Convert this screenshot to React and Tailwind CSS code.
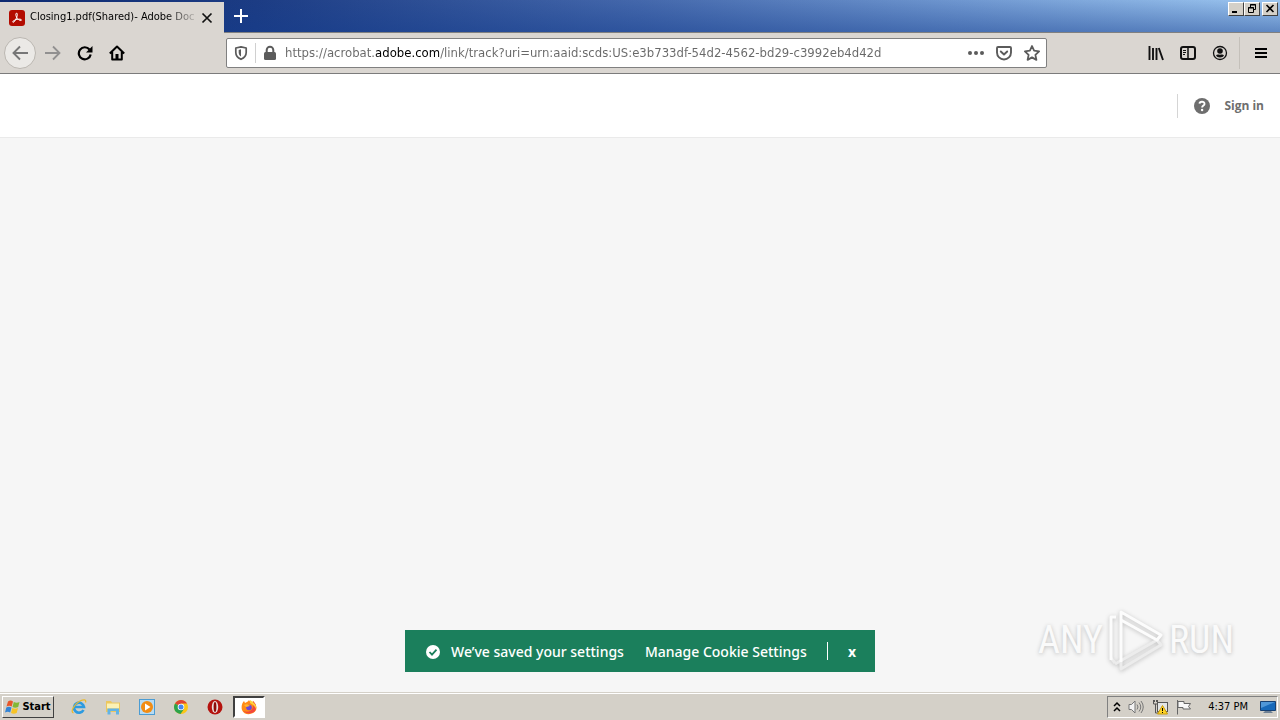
import { useState } from 'react';

const URL_TEXT =
  'https://acrobat.adobe.com/link/track?uri=urn:aaid:scds:US:e3b733df-54d2-4562-bd29-c3992eb4d42d';

function AcrobatIcon() {
  return (
    <svg className="size-4 shrink-0" viewBox="0 0 16 16" aria-hidden="true">
      <rect width="16" height="16" rx="3" fill="#b30b00" />
      <path
        d="M7.3 3.2c1.5-.5 1.1 2.4.4 4.2-.8 2-2.3 4.9-3.6 5-1.5-.5 1-2.4 3.8-3 2.300-.5 4.700-.3 4.600.7-.3 1.200-3-.1-4.200-1.700C7 6.800 6.300 4 7.300 3.200z"
        fill="none"
        stroke="#fff"
        strokeWidth="1"
      />
    </svg>
  );
}

function ShieldIcon() {
  return (
    <svg className="size-4" viewBox="0 0 16 16" aria-hidden="true">
      <path
        d="M8 1.800 13.200 3v4.500c0 3.200-2.300 5.500-5.200 6.800-2.900-1.300-5.200-3.600-5.200-6.800V3z"
        fill="none"
        stroke="#5b5b5b"
        strokeWidth="1.700"
        strokeLinejoin="round"
      />
      <path d="M8 4.300v7.300C6.300 10.600 5.700 9 5.700 7.300V5z" fill="#5b5b5b" />
    </svg>
  );
}

function LockIcon() {
  return (
    <svg className="size-4" viewBox="0 0 16 16" aria-hidden="true">
      <rect x="2" y="7" width="12" height="8" rx="1.500" fill="#5b5b5b" />
      <path d="M4.700 8V5a3.300 3.300 0 0 1 6.600 0v3" fill="none" stroke="#5b5b5b" strokeWidth="2" />
    </svg>
  );
}

function NavButton({ label, children, className = '' }) {
  return (
    <button type="button" aria-label={label} className={`flex size-8 items-center justify-center ${className}`}>
      {children}
    </button>
  );
}

function WindowButton({ label, children }) {
  return (
    <button
      type="button"
      aria-label={label}
      className="flex h-3.5 w-4 items-center justify-center border border-t-white border-r-[#404040] border-b-[#404040] border-l-white bg-[#d4d0c8]"
    >
      <svg className="h-3 w-3.5" viewBox="0 0 14 12" fill="none" stroke="#000">
        {children}
      </svg>
    </button>
  );
}

function TitleBar() {
  return (
    <div className="flex h-[33px] shrink-0 border-b border-[#808080] bg-[linear-gradient(180deg,transparent,rgba(20,60,140,0.45)),linear-gradient(90deg,#0d2a70_0%,#1c3c84_20%,#4468ac_50%,#6f97d0_75%,#9cc6f0_100%)]">
      <div className="mt-0.5 -mb-px flex w-56 items-center bg-[#dad6d1] pl-[9px] text-black">
        <AcrobatIcon />
        <span className="ml-[5px] w-[170px] font-['DejaVu_Sans_Condensed','Noto_Sans',sans-serif] text-[11px] whitespace-nowrap [mask-image:linear-gradient(90deg,#000_80%,transparent)]">
          Closing1.pdf(Shared)- Adobe Doc
        </span>
        <button type="button" aria-label="Close tab" className="ml-px">
          <svg className="size-3" viewBox="0 0 12 12" stroke="#111" strokeWidth="1.700">
            <path d="M1.500 1.500l9 9M10.500 1.500l-9 9" />
          </svg>
        </button>
      </div>
      <NavButton label="New tab" className="ml-px">
        <svg className="size-3.5" viewBox="0 0 14 14" stroke="#fff" strokeWidth="2">
          <path d="M7 0v14M0 7h14" />
        </svg>
      </NavButton>
      <div className="mt-0.5 mr-0.5 ml-auto flex items-start">
        <WindowButton label="Minimize">
          <path d="M3 9h5" strokeWidth="2" />
        </WindowButton>
        <WindowButton label="Restore">
          <path d="M5.500 4V1.500h5v5H9M5 2h6M3.500 4.500h5v5h-5zM3 5h6" />
        </WindowButton>
        <div className="w-0.5" />
        <WindowButton label="Close">
          <path d="M3.500 2l7 7M10.500 2l-7 7" strokeWidth="1.600" />
        </WindowButton>
      </div>
    </div>
  );
}

function Toolbar() {
  return (
    <div className="flex h-[41px] shrink-0 items-center border-b border-[#7b7b7b] bg-[#dad6d1] pl-1">
      <NavButton label="Back" className="rounded-full border border-[#bbb7b1] bg-[#ebe9e6]">
        <svg className="size-4" viewBox="0 0 16 16" fill="none" stroke="#777" strokeWidth="1.900">
          <path d="M16 8H1.500M8 1.500L1.500 8 8 14.500" />
        </svg>
      </NavButton>
      <NavButton label="Forward" className="ml-px">
        <svg className="size-4" viewBox="0 0 16 16" fill="none" stroke="#919090" strokeWidth="1.800">
          <path d="M0 8h14.500M8 1.500L14.500 8 8 14.500" />
        </svg>
      </NavButton>
      <NavButton label="Reload">
        <svg className="size-4" viewBox="0 0 16 16" fill="none" stroke="#000" strokeWidth="2.200">
          <path d="M12.500 4.500A6 6 0 1 0 13.700 9.500" />
          <path d="M15.500 1v6.500H9z" fill="#000" stroke="none" />
        </svg>
      </NavButton>
      <NavButton label="Home">
        <svg className="size-4" viewBox="0 0 16 16" fill="none" stroke="#000" strokeWidth="2">
          <path d="M.8 8.500L8 1.500l7.200 7M3.200 7v7.500h9.600V7" strokeLinejoin="round" />
          <path d="M6.500 9h3v5.500h-3z" fill="#000" stroke="none" />
        </svg>
      </NavButton>

      <div className="ml-[93px] flex h-[30px] min-w-0 flex-1 items-center rounded-xs border border-[#808080] bg-white pl-1.5">
        <button type="button" aria-label="Tracking protection">
          <ShieldIcon />
        </button>
        <div className="mx-1.5 h-5 w-px bg-[#d0d0d0]" />
        <button type="button" aria-label="Site information">
          <LockIcon />
        </button>
        <input
          type="text"
          aria-label="Address"
          defaultValue={URL_TEXT}
          className="ml-[7px] min-w-0 flex-1 bg-[linear-gradient(90deg,#686868_90px,#000_90px,#000_154px,#686868_154px)] bg-clip-text font-['DejaVu_Sans_Condensed','Noto_Sans',sans-serif] text-[13px] text-transparent outline-none"
        />
        <div className="mr-1.5 flex items-center gap-3">
          <button type="button" aria-label="Page actions">
            <svg className="size-4" viewBox="0 0 16 16" fill="#5b5b5b">
              <circle cx="2" cy="8" r="2" />
              <circle cx="8" cy="8" r="2" />
              <circle cx="14" cy="8" r="2" />
            </svg>
          </button>
          <button type="button" aria-label="Save to Pocket">
            <svg className="size-4" viewBox="0 0 16 16" fill="none" stroke="#5b5b5b" strokeWidth="1.900" strokeLinecap="round" strokeLinejoin="round">
              <path d="M2 2h12a1 1 0 0 1 1 1v4.500a7 7 0 0 1-14 0V3a1 1 0 0 1 1-1z" />
              <path d="M4.800 6.500L8 9.500l3.200-3" />
            </svg>
          </button>
          <button type="button" aria-label="Bookmark this page">
            <svg className="size-4" viewBox="0 0 16 16" fill="none" stroke="#5b5b5b" strokeWidth="1.800" strokeLinejoin="round">
              <path d="M8 1l2.100 4.700 5 .6-3.700 3.500 1 5.100L8 12.400l-4.400 2.500 1-5.100L.9 6.300l5-.6z" />
            </svg>
          </button>
        </div>
      </div>

      <div className="ml-[93px] flex h-full items-center">
        <NavButton label="Library">
          <svg className="size-4" viewBox="0 0 16 16" stroke="#111" strokeWidth="1.900">
            <path d="M1.500 1v14M5 3v12M8.500 3v12M10.800 3l4.200 12" />
          </svg>
        </NavButton>
        <NavButton label="Sidebars">
          <svg className="size-4" viewBox="0 0 16 16" fill="none" stroke="#111">
            <rect x="1" y="2" width="14" height="12" rx="2" strokeWidth="2" />
            <path d="M8 2v12" strokeWidth="1.500" />
            <path d="M3 5.500h3M3 7.500h3M3 9.500h2" />
          </svg>
        </NavButton>
        <NavButton label="Account">
          <svg className="size-4" viewBox="0 0 16 16" fill="#111">
            <circle cx="8" cy="8" r="6.500" fill="none" stroke="#111" strokeWidth="1.300" />
            <circle cx="8" cy="6" r="2.800" />
            <path d="M4 10.300C5 9.300 6 9.700 8 9.700s3-.4 4 .6C11.300 11.800 10 12.500 8 12.500s-3.300-.7-4-2.200z" />
          </svg>
        </NavButton>
        <div className="ml-[3px] h-8 w-px bg-[#c4c0ba]" />
        <NavButton label="Menu" className="mr-[3px] ml-[5px]">
          <svg className="size-3.5" viewBox="0 0 14 14" stroke="#000" strokeWidth="2">
            <path d="M1 3h12M1 7h12M1 11h12" />
          </svg>
        </NavButton>
      </div>
    </div>
  );
}

function PageHeader() {
  return (
    <header className="flex h-16 shrink-0 items-center justify-end border-b border-[#eaeaea] bg-white pr-4 text-[#6e6e6e]">
      <div className="h-6 w-px bg-[#d5d5d5]" />
      <button type="button" aria-label="Help" className="ml-4">
        <svg className="size-4" viewBox="0 0 16 16">
          <circle cx="8" cy="8" r="8" fill="#6e6e6e" />
          <path d="M5.500 5.600C5.700 3.200 10.600 3.100 10.500 5.900c0 1.700-2.400 1.700-2.400 3.700" fill="none" stroke="#fff" strokeWidth="1.900" />
          <circle cx="8.100" cy="12" r="1.200" fill="#fff" />
        </svg>
      </button>
      <a href="#signin" className="ml-3.5 font-['Open_Sans',sans-serif] text-[12px] font-bold">
        Sign in
      </a>
    </header>
  );
}

function CookieToast({ onClose }) {
  return (
    <div
      role="status"
      className="absolute bottom-5 left-1/2 flex h-[42px] w-[470px] -translate-x-1/2 items-center bg-[#1b7f5c] pl-5 font-['Noto_Sans',sans-serif] text-[14px] font-medium whitespace-nowrap text-white"
    >
      <svg className="size-4 shrink-0" viewBox="0 0 16 16">
        <circle cx="8" cy="9" r="7" fill="#fff" />
        <path d="M4.500 9l2.500 2.700 4.500-5" fill="none" stroke="#1b7f5c" strokeWidth="1.800" />
      </svg>
      <span className="ml-2.5">We’ve saved your settings</span>
      <a href="#cookies" className="ml-[21px]">
        Manage Cookie Settings
      </a>
      <div className="ml-auto h-[18px] w-px bg-white" />
      <button type="button" aria-label="Close" onClick={onClose} className="mr-[19px] ml-5 font-bold">
        x
      </button>
    </div>
  );
}

function Watermark() {
  return (
    <div className="absolute right-[46px] bottom-5 flex h-16 items-center gap-1 font-['Liberation_Sans_Narrow','Roboto_Condensed','Liberation_Sans',sans-serif] text-[38px] text-[#fafafa] [text-shadow:0_1px_4px_#bdbdbd]">
      <span>ANY</span>
      <svg
        className="h-16 w-[58px] [filter:drop-shadow(0_1px_2px_#bdbdbd)]"
        viewBox="0 0 58 64"
        fill="none"
        strokeWidth="3"
        strokeLinejoin="round"
      >
        <path d="M14 54V61l40-24-4-5L8 56M4 50l4 5" stroke="#ececec" />
        <path d="M9 9H4v43M14 54V4l40 23-4 5L14 12" stroke="#fcfcfc" />
      </svg>
      <span>RUN</span>
    </div>
  );
}

function TaskIcon({ label, children, active }) {
  return (
    <button
      type="button"
      aria-label={label}
      className={
        active
          ? 'flex h-[22px] w-8 items-center justify-center border-2 border-t-[#404040] border-r-white border-b-white border-l-[#404040] bg-white'
          : 'flex h-[22px] w-8 items-center justify-center'
      }
    >
      <svg className="size-4" viewBox="0 0 16 16">
        {children}
      </svg>
    </button>
  );
}

function Taskbar() {
  return (
    <footer className="flex h-7 shrink-0 items-center border-t border-[#d4d0c8] bg-[#d4d0c8] px-0.5 font-['DejaVu_Sans_Condensed','Noto_Sans',sans-serif] text-[11px] text-black shadow-[inset_0_1px_0_#fff]">
      <button
        type="button"
        className="flex h-[22px] w-[52px] items-center justify-center gap-px border border-t-white border-r-[#404040] border-b-[#404040] border-l-white pt-px font-bold"
      >
        <svg className="size-4 shrink-0" viewBox="0 0 16 16">
          <path d="M3 2.500C5 1 6.500 1.500 8 2.500L6.700 7.500C5 6.500 3.500 6.500 1.500 7.500z" fill="#e8562a" />
          <path d="M8.800 3c2 1 3.700 1 5.700 0l-1.300 5c-2 1-4 1-5.700 0z" fill="#83b735" />
          <path d="M1.300 8.500c2-1.200 3.500-1 5.200 0l-1.300 5C3.500 12.500 2 12.500 0 13.500z" fill="#3384d6" />
          <path d="M7.300 9c2 1 3.700 1 5.700 0l-1.300 5c-2 1-4 1-5.700 0z" fill="#f7c325" />
        </svg>
        <span>Start</span>
      </button>
      <div className="ml-[9px] flex items-center gap-0.5">
        <TaskIcon label="Internet Explorer">
          <path d="M12.500 11A5 5 0 1 1 13 8H4" fill="none" stroke="#2d9be0" strokeWidth="2.600" />
          <path d="M2.500 14C-1 13 3 5 9 2c4-2 6.500-1.500 5.500 1.500" fill="none" stroke="#e9b92f" strokeWidth="1.300" />
        </TaskIcon>
        <TaskIcon label="Explorer">
          <path d="M1 2h5l1 1.500h8V13H1z" fill="#ecc75e" />
          <path d="M2 4.500h12v5H2z" fill="#fbf1b5" />
          <path d="M2.500 15.500V9.500h11.500v6h-3v-3.500H5.500v3.500z" fill="#62b3e5" />
        </TaskIcon>
        <TaskIcon label="Media Player">
          <rect x=".5" y=".5" width="15" height="15" fill="#b7dbf3" stroke="#4b9cd3" />
          <circle cx="8" cy="8" r="6" fill="#f28c13" />
          <path d="M6 4.500v7L11.500 8z" fill="#fff" />
        </TaskIcon>
        <TaskIcon label="Chrome">
          <circle cx="8" cy="8" r="7" fill="#fbc617" />
          <path d="M8 8L2 4.400A7 7 0 0 1 14 4.500H8z" fill="#df4434" />
          <path d="M8 8L2 4.400A7 7 0 0 0 7.500 15L11 10z" fill="#2da34c" />
          <circle cx="8" cy="8" r="3.300" fill="#fff" />
          <circle cx="8" cy="8" r="2.500" fill="#4587ef" />
        </TaskIcon>
        <TaskIcon label="Opera">
          <circle cx="8" cy="8" r="7.500" fill="#b5120e" />
          <ellipse cx="8" cy="8" rx="3.200" ry="6" fill="#e9dfdd" />
          <ellipse cx="8" cy="8" rx="1.400" ry="5" fill="#8e0b08" />
        </TaskIcon>
        <TaskIcon label="Firefox" active>
          <path d="M8 1c1 2 2 2 3 3l1-2c3 3 4 6 3 9-2 5-12 6-14 0C0 8 1 4 3 2l1 2c1-1 3-1 4-3z" fill="#ff8a16" />
          <path d="M12 2c4 4 4 8 1 11-3 2-8 2-11-1 5 2 9 0 10-4z" fill="#f3473d" />
          <path d="M9 1c5 3 7 6 6 9-1-2-2-4-6-6z" fill="#ffd33a" />
          <circle cx="8" cy="8.500" r="2.800" fill="#6a49d8" />
          <path d="M3 6c2-1 4-1 6 1-2 0-2 1-4 1z" fill="#ffb52d" />
        </TaskIcon>
      </div>

      <div className="ml-auto flex h-[22px] items-center border border-t-[#808080] border-r-white border-b-white border-l-[#808080] pl-1">
        <button type="button" aria-label="Show hidden icons">
          <svg className="h-3 w-2.5" viewBox="0 0 10 12" fill="none" stroke="#000" strokeWidth="1.500">
            <path d="M2 5l3-3 3 3M2 10l3-3 3 3" />
          </svg>
        </button>
        <svg className="ml-1.5 size-4" viewBox="0 0 16 16" fill="none" stroke="#777">
          <path d="M1 5.500h2.500L7 2v12l-3.500-3.500H1z" fill="#f3f3f3" />
          <path d="M9 5.500q2 2.500 0 5M11 3.500q3.500 4.500 0 9M13 2q4.500 6 0 12" />
        </svg>
        <svg className="ml-2 size-4" viewBox="0 0 16 16" fill="none" stroke="#555">
          <rect x="5.500" y="3.500" width="10" height="9" fill="#e3e5e5" />
          <path d="M1.500 1v4h4V1M3.500 5v9h5M2.500 1v2M4.500 1v2" />
          <path d="M10.500 6.500L15.500 15h-10z" fill="#ffd426" stroke="#c79a0b" />
          <path d="M10.500 9v3M10.500 13v1" stroke="#000" />
        </svg>
        <svg className="ml-2 size-4" viewBox="0 0 16 16" fill="#f8f8f8" stroke="#666">
          <path d="M1.500 1v14.500M2 2.500h6v2h6.500l-2 3 2 2.500H7V8.500H2z" />
        </svg>
        <time className="ml-4 pt-0.5">4:37 PM</time>
        <svg className="mr-px ml-3 size-4" viewBox="0 0 16 16">
          <path d="M.5 2.500h15v9H.5z" fill="#1769b9" stroke="#174072" />
          <path d="M1 3h14L1 9z" fill="#4f97d8" />
          <path d="M5 12h6l2 2H3z" fill="#708194" />
        </svg>
      </div>
    </footer>
  );
}

export default function App() {
  const [showToast, setShowToast] = useState(true);

  return (
    <div className="flex h-screen flex-col overflow-hidden bg-[#f6f6f6]">
      <TitleBar />
      <Toolbar />
      <PageHeader />
      <main className="relative flex-1">
        {showToast && <CookieToast onClose={() => setShowToast(false)} />}
        <Watermark />
      </main>
      <Taskbar />
    </div>
  );
}
